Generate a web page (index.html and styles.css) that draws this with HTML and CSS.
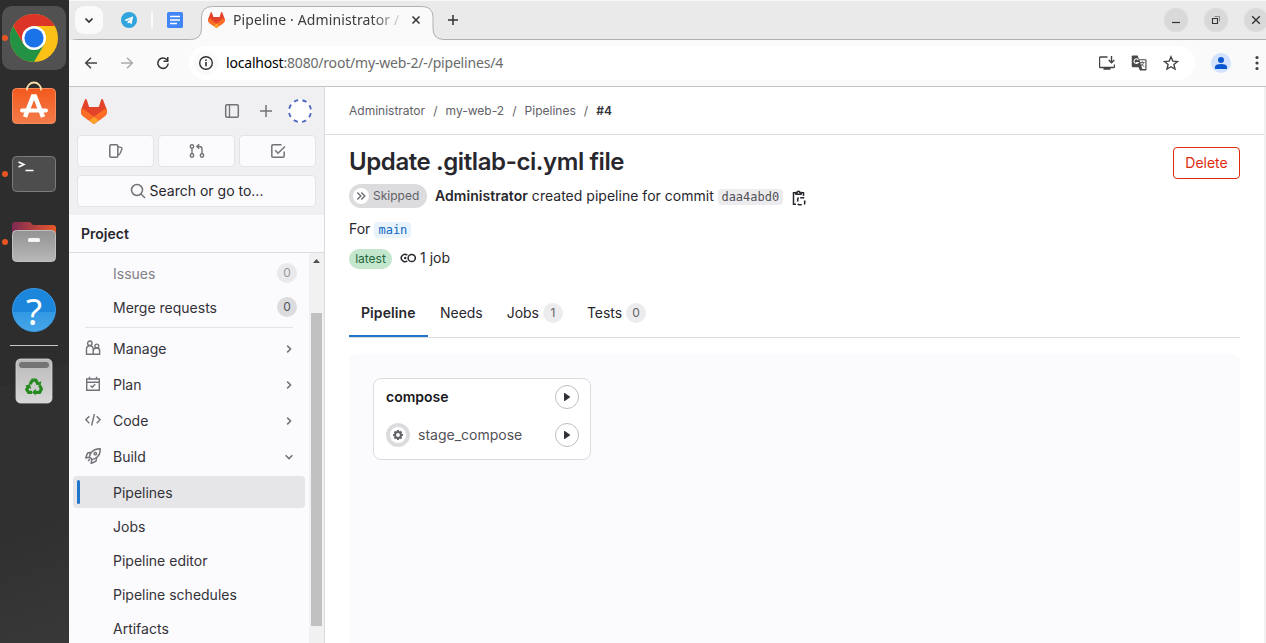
FILE: index.html
```html
<!DOCTYPE html>
<html lang="en">
<head>
<meta charset="utf-8">
<title>Pipeline · Administrator / my-web-2 · GitLab</title>
<link rel="stylesheet" href="styles.css">
</head>
<body>
<svg class="defs" aria-hidden="true">
  <symbol id="tanuki" viewBox="0 0 25 24">
    <path fill="#E24329" d="m24.507 9.5-.034-.09L21.082.562a.896.896 0 0 0-1.694.091l-2.29 7.01H7.825L5.535.653a.898.898 0 0 0-1.694-.09L.451 9.411.416 9.5a6.297 6.297 0 0 0 2.09 7.278l.012.01.03.022 5.16 3.867 2.56 1.935 1.554 1.176a1.051 1.051 0 0 0 1.268 0l1.555-1.176 2.56-1.935 5.197-3.89.014-.01A6.297 6.297 0 0 0 24.507 9.5Z"/>
    <path fill="#FC6D26" d="m24.507 9.5-.034-.09a11.44 11.44 0 0 0-4.56 2.051l-7.447 5.632 4.742 3.584 5.197-3.89.014-.01A6.297 6.297 0 0 0 24.507 9.5Z"/>
    <path fill="#FCA326" d="m7.707 20.677 2.56 1.935 1.555 1.176a1.051 1.051 0 0 0 1.268 0l1.555-1.176 2.56-1.935-4.743-3.584-4.755 3.584Z"/>
    <path fill="#FC6D26" d="M5.01 11.461a11.43 11.43 0 0 0-4.56-2.05L.416 9.5a6.297 6.297 0 0 0 2.09 7.278l.012.01.03.022 5.16 3.867 4.745-3.584-7.444-5.632Z"/>
  </symbol>
  <symbol id="chev" viewBox="0 0 16 16"><path d="M6.2 4.6 9.6 8l-3.4 3.4" fill="none" stroke="#737278" stroke-width="1.5"/></symbol>
  <symbol id="play" viewBox="0 0 16 16"><path d="M5 4.500v7a.5.5 0 0 0 .8.4l5-3.500a.5.5 0 0 0 0-.8l-5-3.500a.5.5 0 0 0-.8.4Z" fill="#333238"/></symbol>
</svg>
<div class="desktop">
  <aside class="dock">
    <div class="dock-item active"><i class="dot"></i>
      <svg width="48" height="48" viewBox="0 0 48 48">
        <circle cx="24" cy="24" r="24" fill="#fbc116"/>
        <path d="M3.2 12A24 24 0 0 0 24 48L34.4 30 24 24 13.6 30Z" fill="#249244"/>
        <path d="M3.2 12A24 24 0 0 1 44.8 12H24v12L13.6 30Z" fill="#dc3528"/>
        <circle cx="24" cy="24" r="12" fill="#fff"/><circle cx="24" cy="24" r="9.6" fill="#1a73e8"/>
      </svg></div>
    <div class="dock-item store">
      <svg width="46" height="44" viewBox="0 0 46 44">
        <defs><linearGradient id="og" x2="0" y2="1"><stop offset="0" stop-color="#f3591d"/><stop offset="1" stop-color="#f47c4b"/></linearGradient></defs>
        <rect x="1.500" y="7.500" width="43" height="35" rx="4" fill="url(#og)" stroke="#f58a5c"/>
        <path d="M16 9.500V8.500a7 7 0 0 1 14 0v1" fill="none" stroke="#f5dca8" stroke-width="1.800"/>
        <path d="M14 36 22 15.500h2L32 36" fill="none" stroke="#fff" stroke-width="4.500"/><path d="M11 29.500h24" stroke="#fff" stroke-width="4" stroke-linecap="round"/>
      </svg></div>
    <div class="dock-item term"><i class="dot"></i>
      <svg width="46" height="38" viewBox="0 0 46 38"><rect x="1.5" y="1.5" width="43" height="35" rx="4" fill="#4d4d4d" stroke="#7b7b7b"/><path d="m7.500 7 5.500 2.500-5.500 2.500" fill="none" stroke="#fff" stroke-width="1.500"/><path d="M14.500 15.500h8" stroke="#fff" stroke-width="1.500"/></svg></div>
    <div class="dock-item files"><i class="dot"></i>
      <svg width="46" height="42" viewBox="0 0 46 42">
        <defs><linearGradient id="fg"><stop offset="0" stop-color="#7d2a55"/><stop offset="1" stop-color="#e9592a"/></linearGradient><linearGradient id="gg" x2="0" y2="1"><stop offset="0" stop-color="#929292"/><stop offset="1" stop-color="#b8b8b8"/></linearGradient></defs>
        <path d="M1 18V4q0-3 3-3h15l3 3h20q3 0 3 3v11Z" fill="url(#fg)"/>
        <rect x="1.500" y="9.500" width="43" height="31" rx="4" fill="url(#gg)" stroke="#c0c0c0"/><rect x="17" y="17" width="12" height="4" rx="1.500" fill="#f5f5f5"/>
      </svg></div>
    <div class="dock-item help"><span>?</span></div>
    <hr class="dock-line">
    <div class="dock-item trash">
      <svg width="38" height="46" viewBox="0 0 38 46"><defs><linearGradient id="tg" x2="0" y2="1"><stop offset="0" stop-color="#b9b9b9"/><stop offset="1" stop-color="#d8d8d8"/></linearGradient></defs>
      <rect x="1" y="1" width="36" height="44" rx="4.500" fill="url(#tg)" stroke="#d8d8d8" stroke-width=".8"/><rect x="4" y="4" width="30" height="6" rx="3" fill="#747474"/>
      <g transform="translate(2.200 3.200) scale(.88)"><g fill="none" stroke="#278a20" stroke-width="3.600"><path d="m14.500 26 3-4.500h3.500l2.500 4"/><path d="m25.500 27.500 2 4-2 4H20"/><path d="M17 35.500h-4l-2.200-3.500 2.200-4"/></g>
      <path d="m21 26.500 5.500 1.500 1-5.500ZM21 31l-4 4.500 4 3.500ZM9 28l5.500-2 1.500 5.500Z" fill="#278a20"/></g></svg></div>
  </aside>
  <div class="browser">
    <header class="strip">
      <svg class="strip-shape" width="1197" height="40" viewBox="0 0 1197 40"><path d="M-.5 50V47.500q0-8 8-8H121.500q11 0 11-11V17.500q0-11 11-11H353q11 0 11 11V28.500q0 11 11 11H1198V50Z" fill="#fafafa" stroke="#b0b0b0"/></svg>
      <button class="tabsearch"><svg width="16" height="16" viewBox="0 0 16 16"><path d="m4.500 6.500 3.500 3.500 3.500-3.500" fill="none" stroke="#303030" stroke-width="1.700"/></svg></button>
      <svg class="tele" width="16" height="16" viewBox="0 0 16 16"><circle cx="8" cy="8" r="8" fill="#2fa4dd"/><path d="m3.200 7.900 9-3.700-1.600 8.100-2.500-1.800-1.300 1.300-.3-2.300 3.700-3.200-4.700 2.700Z" fill="#fff"/></svg>
      <i class="sep"></i>
      <svg class="docs" width="16" height="16" viewBox="0 0 16 16"><rect width="16" height="16" rx="1.500" fill="#4285f4"/><path d="M3 4.500h10M3 8h10M3 11.500h7" stroke="#fff" stroke-width="1.500"/></svg>
      <div class="tab"><svg width="17" height="16"><use href="#tanuki"/></svg><span class="tab-title">Pipeline · Administrator /</span>
        <svg class="x" width="16" height="16" viewBox="0 0 16 16"><path d="m4.500 4.500 7 7m0-7-7 7" stroke="#333" stroke-width="1.500"/></svg></div>
      <svg class="plus" width="16" height="16" viewBox="0 0 16 16"><path d="M8 3v10M3 8h10" stroke="#303030" stroke-width="1.500"/></svg>
      <div class="winbtns">
        <span><svg width="12" height="12" viewBox="0 0 12 12"><path d="M2 8.500h8" stroke="#333" stroke-width="1.200"/></svg></span>
        <span><svg width="12" height="12" viewBox="0 0 12 12"><path d="M2.500 4.500h5v5h-5Z" fill="none" stroke="#333" stroke-width="1.100"/><path d="M4.500 2.500h5v5" fill="none" stroke="#888"/></svg></span>
        <span><svg width="12" height="12" viewBox="0 0 12 12"><path d="m2.200 2.200 7.600 7.600m0-7.600L2.200 9.800" stroke="#333" stroke-width="1.400"/></svg></span>
      </div>
    </header>
    <div class="toolbar">
      <svg class="nv" width="16" height="16" viewBox="0 0 16 16"><path d="M14 8H3m5-5.300L2.700 8 8 13.300" fill="none" stroke="#444" stroke-width="1.500"/></svg>
      <svg class="nv" width="16" height="16" viewBox="0 0 16 16"><path d="M2 8h11M8 2.700 13.300 8 8 13.300" fill="none" stroke="#aaa" stroke-width="1.500"/></svg>
      <svg class="nv" width="16" height="16" viewBox="0 0 16 16"><path d="M12.300 5.200A5.200 5.200 0 1 0 13.200 8.500" fill="none" stroke="#333" stroke-width="1.500"/><path d="M13.500 2v5h-5V5.500H12V2Z" fill="#333"/></svg>
      <div class="omni">
        <span class="info"><svg width="16" height="16" viewBox="0 0 16 16"><circle cx="8" cy="8" r="6.300" fill="none" stroke="#303030" stroke-width="1.400"/><path d="M8 7v4.200M8 4.500v1.600" stroke="#303030" stroke-width="1.600"/></svg></span>
        <span class="url"><b>localhost</b>:8080/root/my-web-2/-/pipelines/4</span>
        <svg class="oi first" width="16" height="16" viewBox="0 0 16 16"><path d="M8.500 2H1.500q-1 0-1 1v8.500q0 1 1 1h13q1 0 1-1V9.500M4.500 14h7" fill="none" stroke="#444" stroke-width="1.400"/><path d="M12.500 1v6.500M9.700 5l2.800 2.800L15.300 5" fill="none" stroke="#444" stroke-width="1.400"/></svg>
        <svg class="oi" width="16" height="16" viewBox="0 0 17 17"><path d="M2 .5h5l1.500 4H15.500q1 0 1 1v10q0 1-1 1H9.500L8 13H2Q.8 13 .8 12V1.500Q.8.500 2 .500Z" fill="#4a4a4a"/><path d="m9 5.500 3 9.500H15.300V5.500Z" fill="#fff"/><path d="M7.800 5.200A2.500 2.500 0 1 0 7.800 8H5.500" fill="none" stroke="#fff" stroke-width="1.100"/><path d="M9.500 8h5M12 6.500V8m1.500 0q-.8 3-3 4m.2-3q1 2 3.500 3.500" fill="none" stroke="#555" stroke-width=".9"/></svg>
        <svg class="oi" width="16" height="16" viewBox="0 0 16 16"><path d="m8 1.800 1.800 4.300 4.700.4-3.600 3 1.100 4.600L8 11.700l-4 2.400 1.100-4.600-3.600-3 4.700-.4Z" fill="none" stroke="#444" stroke-width="1.400"/></svg>
      </div>
      <span class="prof"><svg width="14" height="14" viewBox="0 0 14 14"><circle cx="7" cy="4" r="3" fill="#0b57d0"/><path d="M1 13v-2q0-3 6-3t6 3v2Z" fill="#0b57d0"/></svg></span>
      <svg class="kebab" width="6" height="16" viewBox="0 0 6 16"><g fill="#404040"><circle cx="3" cy="2.500" r="1.600"/><circle cx="3" cy="8" r="1.600"/><circle cx="3" cy="13.500" r="1.600"/></g></svg>
    </div>
    <div class="page">
      <nav class="side">
        <div class="side-top">
          <div class="brand"><svg width="26" height="25"><use href="#tanuki"/></svg>
            <svg class="b1" width="16" height="16" viewBox="0 0 16 16"><rect x="1.700" y="1.700" width="12.600" height="12.600" rx="1.200" fill="none" stroke="#737278" stroke-width="1.500"/><path d="M5.500 2v12" stroke="#737278" stroke-width="1.300"/></svg>
            <svg class="b2" width="16" height="16" viewBox="0 0 16 16"><path d="M8 2v12M2 8h12" stroke="#737278" stroke-width="1.500"/></svg>
            <svg class="avatar" width="24" height="24" viewBox="0 0 24 24"><circle cx="12" cy="12" r="12" fill="#fff"/><circle cx="12" cy="12" r="11" fill="none" stroke="#5068bd" stroke-width="1.900" stroke-dasharray="4.400 4.240" stroke-dashoffset="-2.120"/></svg>
          </div>
          <div class="trio">
            <span><svg width="16" height="16" viewBox="0 0 16 16"><rect x="1.800" y="1.700" width="8" height="12.600" rx="1.200" fill="none" stroke="#737278" stroke-width="1.500"/><path d="m10 3.700 3.300 1q.9.300.7 1.200l-1.800 4.300q-.5 1-2.200 2" fill="none" stroke="#737278" stroke-width="1.400"/></svg></span>
            <span><svg width="16" height="16" viewBox="0 0 16 16"><g fill="none" stroke="#737278" stroke-width="1.400"><circle cx="3" cy="3.500" r="1.700"/><circle cx="3" cy="12.500" r="1.700"/><circle cx="13" cy="12.500" r="1.700"/><path d="M3 5.200v5.600M13 10.800V6q0-2.500-2.500-2.500H8M10.200 1.200 7.800 3.500l2.400 2.300"/></g></svg></span>
            <span><svg width="16" height="16" viewBox="0 0 16 16"><path d="M14.200 8.500V13q0 1.200-1.200 1.200H3q-1.200 0-1.200-1.200V3Q1.800 1.800 3 1.800h8.500M5.200 7.300l2.800 2.900L15 3.500" fill="none" stroke="#737278" stroke-width="1.500"/></svg></span>
          </div>
          <div class="search"><svg width="16" height="16" viewBox="0 0 16 16"><circle cx="7" cy="7" r="5.500" fill="none" stroke="#737278" stroke-width="1.500"/><path d="m11 11 4 4" stroke="#737278" stroke-width="1.500"/></svg><span>Search or go to...</span></div>
        </div>
        <div class="ctx">Project</div>
        <div class="scroll">
          <div class="menu">
            <div class="it sub faded"><span>Issues</span><em>0</em></div>
            <div class="it sub"><span>Merge requests</span><em>0</em></div>
            <hr>
            <div class="it"><svg width="16" height="16" viewBox="0 0 16 16"><g fill="none" stroke="#737278" stroke-width="1.400"><circle cx="4.800" cy="3.200" r="2.200"/><circle cx="11.800" cy="6" r="1.900"/><path d="M8.300 14.200H1.500V9q0-3.300 3.300-3.300T8.200 9v5.200Zm0 0h6.300v-3.600q0-2.600-2.800-2.600-3.500 0-3.500 3"/></g></svg><span>Manage</span><svg class="c" width="16" height="16"><use href="#chev"/></svg></div>
            <div class="it"><svg width="16" height="16" viewBox="0 0 16 16"><path d="M1.700 3h12.600v11.200H1.700ZM1.700 6.200h12.600M4.500.8V3m7-2.200V3M5.500 9.600l1.700 1.700 3-3" fill="none" stroke="#737278" stroke-width="1.400"/></svg><span>Plan</span><svg class="c" width="16" height="16"><use href="#chev"/></svg></div>
            <div class="it"><svg width="16" height="16" viewBox="0 0 16 16"><path d="M4.300 4.200.9 7.700l3.400 3.500m7.400-7 3.400 3.500-3.400 3.500M9.400 2 6.600 13.500" fill="none" stroke="#737278" stroke-width="1.400"/></svg><span>Code</span><svg class="c" width="16" height="16"><use href="#chev"/></svg></div>
            <div class="it parent"><svg width="16" height="16" viewBox="0 0 16 16"><g fill="none" stroke="#737278" stroke-width="1.400"><path d="M15.200.8q-5-.2-8 2.700Q4.600 6.200 4.400 8.800l2.800 2.800q2.800-.3 5.300-2.800 3-3 2.700-8ZM6.500 4.300 2.800 5Q1.500 7 .8 9.800l3.800-.6M11.700 9.500 11 13.200q-2 1.300-4.800 2l.6-3.800M5 11 3 13"/><circle cx="10.300" cy="5.700" r="1.200"/></g></svg><span>Build</span><svg class="c down" width="16" height="16"><use href="#chev"/></svg></div>
            <div class="it sub child on"><span>Pipelines</span></div>
            <div class="it sub child"><span>Jobs</span></div>
            <div class="it sub child"><span>Pipeline editor</span></div>
            <div class="it sub child"><span>Pipeline schedules</span></div>
            <div class="it sub child"><span>Artifacts</span></div>
          </div>
          <div class="bar"><svg width="15" height="17" viewBox="0 0 15 17"><path d="M4 10 7.500 6 11 10Z" fill="#505050"/></svg><i></i></div>
        </div>
      </nav>
      <main class="main">
        <div class="crumbs"><span>Administrator</span><s>/</s><span>my-web-2</span><s>/</s><span>Pipelines</span><s>/</s><b>#4</b></div>
        <div class="content">
          <div class="head"><h1>Update .gitlab-ci.yml file</h1><button class="del">Delete</button></div>
          <div class="row status"><span class="skip"><i><svg width="16" height="16" viewBox="0 0 16 16"><path d="m4.300 4.500 3.500 3.500-3.500 3.500M8.300 4.500l3.500 3.500-3.500 3.500" fill="none" stroke="#737278" stroke-width="1.500"/></svg></i>Skipped</span><b>Administrator</b><span class="created">created pipeline for commit</span><code>daa4abd0</code>
            <svg class="clip" width="16" height="16" viewBox="0 0 16 16"><path d="M5 14.200H2.500V2.700H5m5 0h2.500V6M5 4.300V2.500h1.200a1.300 1.300 0 0 1 2.600 0H10v1.800Z" fill="none" stroke="#28272d" stroke-width="1.500"/><rect x="6.700" y="7.700" width="7" height="7" rx="1.500" fill="none" stroke="#28272d" stroke-width="1.600" stroke-dasharray="4 2.350" stroke-dashoffset="-1"/></svg></div>
          <div class="row ref">For<code>main</code></div>
          <div class="row jobs"><span class="latest">latest</span><svg width="16" height="16" viewBox="0 0 16 16"><g fill="none" stroke="#28272d" stroke-width="1.500"><circle cx="11.700" cy="8" r="3.600"/><path d="M7.300 5.300A3.600 3.600 0 1 0 7.300 10.700"/></g><circle cx="5.200" cy="8" r="1.200" fill="#28272d"/></svg><span>1 job</span></div>
          <div class="tabs"><span class="cur">Pipeline</span><span>Needs</span><span>Jobs<em>1</em></span><span>Tests<em>0</em></span></div>
          <div class="graph"><div class="stage">
            <div class="job"><b>compose</b><u><svg width="16" height="16"><use href="#play"/></svg></u></div>
            <div class="job"><i class="gear"><svg width="12" height="12" viewBox="0 0 12 12"><circle cx="6" cy="6" r="2.900" fill="none" stroke="#626168" stroke-width="2"/><path d="M6 1v1.500M6 9.500V11M1 6h1.500M9.500 6H11M2.500 2.500l1 1M8.500 8.500l1 1M2.500 9.500l1-1M8.500 3.500l1-1" stroke="#626168" stroke-width="2"/></svg></i><span>stage_compose</span><u><svg width="16" height="16"><use href="#play"/></svg></u></div>
          </div></div>
        </div>
      </main>
      <i class="edge"></i>
    </div>
  </div>
</div>
</body>
</html>
```
FILE: styles.css
```css
* { box-sizing: border-box; }
body { margin: 0; width: 1266px; height: 643px; overflow: hidden; font: 14px/20px Inter, "Liberation Sans", sans-serif; color: #28272d; }
svg { display: block; flex: none; }
em, i { font-style: normal; }
s, u { text-decoration: none; }
button { font: inherit; padding: 0; }
.defs { position: absolute; width: 0; height: 0; }
.desktop { display: flex; height: 643px; }

.dock { width: 69px; flex: none; padding-top: 6px; background: linear-gradient(160deg, #2d2d2d 0 58%, #303030 58% 80%, #383838); }
.dock-item { position: relative; width: 64px; height: 64px; margin-left: 2px; display: flex; align-items: center; justify-content: center; }
.dock-item.active { background: #515151; border-radius: 10px; }
.dot { position: absolute; left: 0; top: 29px; width: 6px; height: 6px; border-radius: 50%; background: #e95420; }
.store { margin-top: 1px; }
.term { margin-top: 7px; }
.files { margin-top: 4px; }
.help { margin-top: 4px; }
.help span { width: 44px; height: 44px; border-radius: 50%; background: linear-gradient(#1c86dc 55%, #3199e3 55%, #48a5e8); border: 1px solid #3b9ce8; color: #fff; font: 37px/43px "Noto Sans", sans-serif; text-align: center; }
.dock-line { width: 48px; height: 1px; border: 0; margin: 3px 0 0 10px; background: #c8c8c8; }
.trash { margin-top: 3px; }

.browser { flex: 1; min-width: 0; display: flex; flex-direction: column; background: #fafafa; }
.strip { position: relative; height: 40px; flex: none; display: flex; align-items: center; background: #eaeaea; box-shadow: inset 0 1px #f8f8f8; }
.strip > * { position: relative; }
.strip .strip-shape { position: absolute; left: 0; top: 0; }
.tabsearch { width: 28px; height: 28px; margin-left: 6px; border: 0; border-radius: 9px; background: #fafafa; display: grid; place-items: center; }
.tele { margin-left: 18px; }
.sep { width: 2px; height: 16px; margin-left: 14px; background: #fafafa; }
.docs { margin-left: 14px; }
.tab { width: 232px; height: 32px; margin-left: 18px; padding-left: 7px; display: flex; align-items: center; }
.tab-title { width: 168px; margin-left: 8px; margin-right: -5px; white-space: nowrap; font: 14px/20px "Noto Sans", sans-serif; letter-spacing: .12px; color: #3c3c3c; mask-image: linear-gradient(90deg, #000 138px, rgba(0, 0, 0, .15) 168px); }
.x { margin-left: 12px; }
.plus { margin-left: 12px; }
.winbtns { margin-left: auto; margin-right: -2px; display: flex; gap: 16px; }
.winbtns span { width: 24px; height: 24px; border-radius: 50%; background: #d9d9d9; display: grid; place-items: center; }
.toolbar { position: relative; height: 47px; flex: none; border-bottom: 1px solid #c4c4c6; display: flex; align-items: center; padding-left: 14px; }
.nv { margin-right: 20px; }
.omni { width: 1006px; height: 34px; margin-left: -2px; border-radius: 17px; background: #fff; display: flex; align-items: center; padding-left: 5px; }
.info { width: 24px; height: 24px; border-radius: 50%; background: #fafafa; display: grid; place-items: center; }
.url { margin-left: 8px; font: 14px/20px "Noto Sans", sans-serif; letter-spacing: -.19px; color: #6b6b6b; white-space: nowrap; }
.url b { font-weight: 400; color: #000; }
.oi { margin-right: 16px; }
.oi.first { margin-left: auto; }
.prof { width: 20px; height: 20px; margin-left: 16px; border-radius: 50%; background: #d3e3fd; display: grid; place-items: center; }
.kebab { margin-left: 23px; }

.page { flex: 1; min-height: 0; display: flex; background: #fff; }
.side { width: 256px; flex: none; border-right: 1px solid #dcdcde; display: flex; flex-direction: column; background: #fbfafd; }
.side-top { height: 128px; flex: none; padding: 8px; background: #f0f0f2; }
.brand { height: 32px; display: flex; align-items: center; padding-left: 4px; }
.b1 { margin-left: 117px; }
.b2 { margin-left: 18px; }
.avatar { margin-left: 14px; }
.trio { display: flex; gap: 4px; margin-top: 8px; }
.trio span, .search { height: 32px; border: 1px solid #e4e4e7; border-radius: 4px; background: #fbfafd; display: flex; align-items: center; justify-content: center; }
.trio span { width: 77px; }
.search { margin-top: 8px; gap: 4px; }
.ctx { height: 38px; flex: none; border-bottom: 1px solid #dcdcde; padding: 9px 12px; font-weight: 600; }
.scroll { flex: 1; min-height: 0; overflow: hidden; display: flex; }
.menu { width: 240px; padding: 5px 8px 0 4px; flex: none; }
.it { height: 32px; width: 232px; margin-bottom: 4px; padding: 0 8px 0 12px; border-radius: 4px; display: flex; align-items: center; gap: 12px; color: #333238; }
.it svg { position: relative; top: -1px; }
.it .c { margin-left: auto; top: 0; }
.it .down { transform: rotate(90deg); }
.it.parent { margin-bottom: 3px; }
.it.sub { padding-left: 40px; margin-bottom: 2px; position: relative; }
.it.child { padding-top: 2px; }
.it.on { background: #e6e6e8; }
.it.on::before { content: ""; position: absolute; left: 4px; top: 4px; width: 3px; height: 24px; border-radius: 2px; background: #1f75cb; }
.it em { width: 20px; height: 20px; margin-left: auto; border-radius: 10px; background: #dcdcde; text-align: center; font-size: 12px; color: #535158; position: relative; top: -1px; }
.it.faded { color: #818086; }
.it.faded em { background: #e9e9ec; color: #98979c; }
.menu hr { height: 1px; border: 0; background: #e4e4e7; margin: 3px 8px 5px 12px; width: 208px; }
.bar { width: 15px; background: #f1f1f1; }
.bar i { display: block; width: 11px; height: 313px; margin: 43px 0 0 2px; background: #c1c1c1; }

.main { flex: 1; min-width: 0; }
.crumbs { height: 48px; border-bottom: 1px solid #dcdcde; padding: 0 24px; display: flex; align-items: center; font-size: 12px; color: #626168; }
.crumbs s { width: 20.5px; text-align: center; }
.crumbs b { font-weight: 600; color: #333238; }
.content { padding: 12px 24px 0; height: 508px; display: flex; flex-direction: column; }
.head { display: flex; height: 32px; flex: none; justify-content: space-between; }
h1 { margin: 0; font-size: 24px; line-height: 30px; font-weight: 600; letter-spacing: -.41px; }
.del { width: 67px; height: 32px; border: 1px solid #dd2b0e; border-radius: 4px; background: #fff; color: #dd2b0e; }
.row { display: flex; align-items: center; white-space: nowrap; flex: none; }
.status { height: 24px; margin-top: 5px; }
.status b { font-weight: 600; margin-left: 8px; letter-spacing: .05px; }
.created { margin-left: 4px; letter-spacing: .02px; }
.skip { width: 78px; height: 24px; border-radius: 12px; padding-left: 4px; background: #dcdcde; color: #626168; font-size: 12px; display: flex; align-items: center; gap: 4px; }
.skip i { background: #fff; border-radius: 50%; }
code { font: 12px/16px "DejaVu Sans Mono", "Liberation Mono", monospace; height: 16px; border-radius: 4px; text-align: center; }
.status code { width: 65px; margin-left: 4px; background: #ececef; color: #535158; position: relative; top: 1px; }
.clip { margin-left: 8px; position: relative; top: 2px; }
.ref { height: 20px; margin-top: 11px; }
.ref code { width: 37px; margin-left: 4px; background: #e9f3fc; color: #1068bf; position: relative; top: 1px; }
.jobs { height: 20px; margin-top: 9px; }
.latest { width: 43px; height: 20px; border-radius: 10px; background: #c3e6cd; color: #24663b; font-size: 12px; text-align: center; position: relative; top: 1px; }
.jobs svg { margin: 0 4px 0 8px; }
.tabs { height: 50px; flex: none; margin-top: 20px; border-bottom: 1px solid #dcdcde; display: flex; }
.tabs span { height: 49px; padding: 0 12px; display: flex; align-items: center; letter-spacing: -.03px; }
.tabs .cur { width: 79px; font-weight: 600; border-bottom: 2px solid #1f75cb; padding-top: 2px; letter-spacing: .08px; }
.tabs em { width: 20px; height: 20px; margin-left: 4px; border-radius: 10px; background: #ececef; color: #626168; font-size: 12px; text-align: center; }
.graph { flex: 1; margin-top: 16px; border-radius: 8px 8px 0 0; background: #fbfafd; padding: 24px; }
.stage { width: 218px; height: 82px; border: 1px solid #dcdcde; border-radius: 8px; background: #fff; padding: 6px 11px 0 12px; }
.job { height: 24px; display: flex; align-items: center; margin-bottom: 14px; color: #535158; }
.job b { font-weight: 600; color: #18171d; }
.job u { margin-left: auto; width: 24px; height: 24px; border: 1px solid #bfbfc3; border-radius: 50%; display: grid; place-items: center; }
.gear { width: 24px; height: 24px; margin-right: 8px; border: 4px solid #dcdcde; border-radius: 50%; display: grid; place-items: center; }
.edge { width: 2px; background: #f1f1f1; }
```
